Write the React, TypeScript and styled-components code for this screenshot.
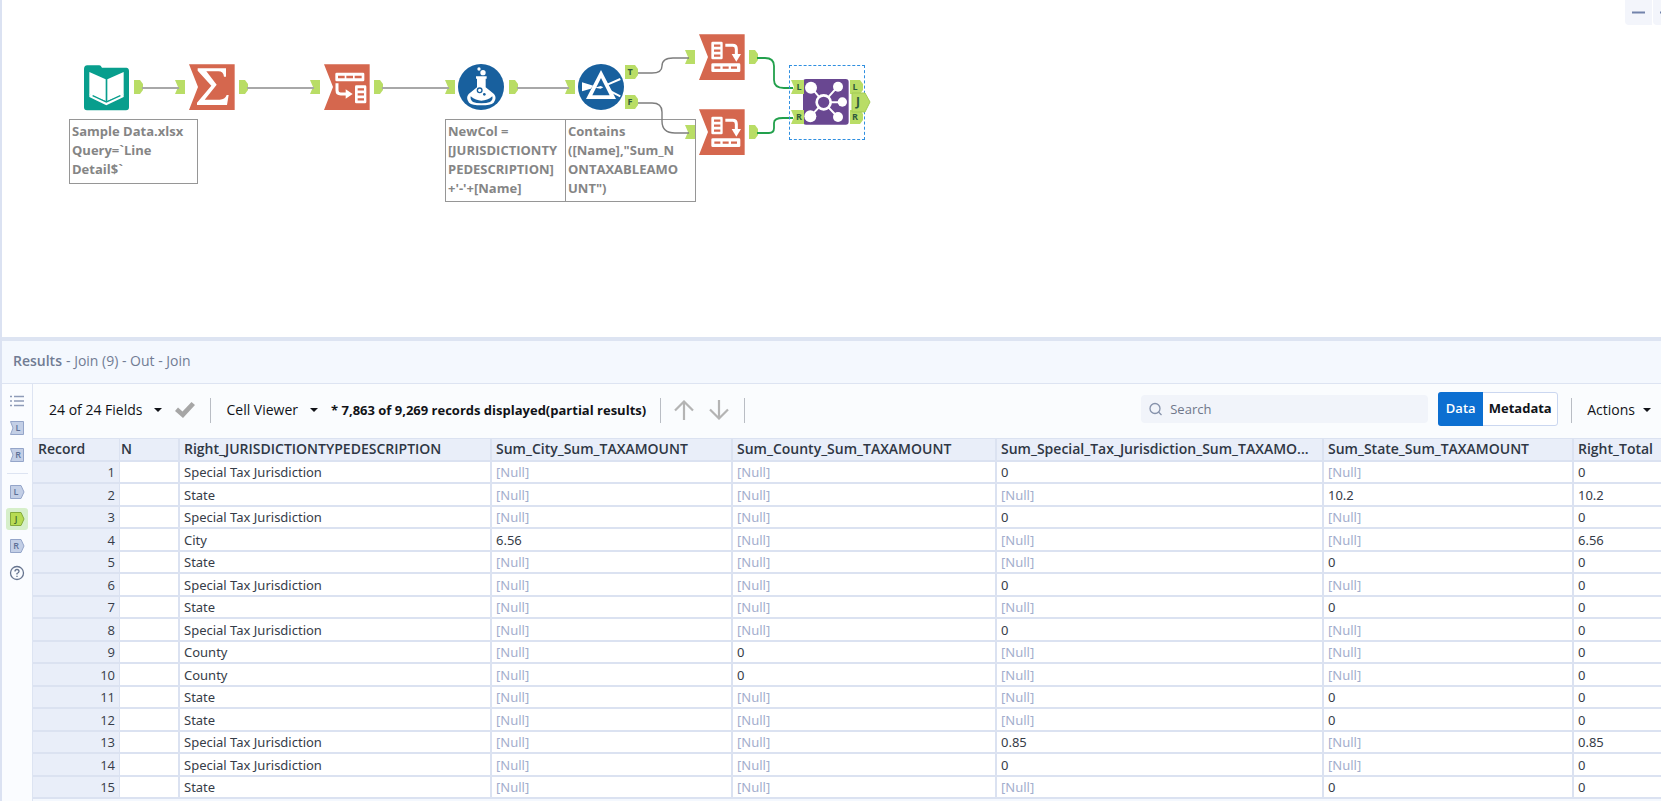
import React from 'react';
import styled, { createGlobalStyle, css } from 'styled-components';

const GlobalStyle = createGlobalStyle`
  *, *::before, *::after { box-sizing: border-box; }
  body {
    margin: 0;
    background: #ffffff;
    font-family: "Open Sans", "Noto Sans", sans-serif;
    font-size: 13px;
    line-height: 18px;
    color: #2f3744;
  }
  button, input { font: inherit; color: inherit; }
`;

/* ---------- workspace ---------- */

const Workspace = styled.div`
  display: flex;
  flex-direction: column;
  height: 100vh;
  overflow: hidden;
  border-left: 2px solid #dbe2f2;
`;

const Canvas = styled.main`
  position: relative;
  flex: none;
  height: 337px;
  overflow: hidden;
  background: #ffffff;
`;

const CanvasContent = styled.div`
  position: absolute;
  top: 0;
  left: -2px;
`;

const Placed = styled.div<{ $x: number; $y: number }>`
  position: absolute;
  left: ${(p) => p.$x}px;
  top: ${(p) => p.$y}px;
  line-height: 0;
`;

const Wires = styled.svg`
  position: absolute;
  left: 0;
  top: 0;
  fill: none;
`;

const Annotation = styled.div<{ $x: number; $width: number; $height: number }>`
  position: absolute;
  left: ${(p) => p.$x}px;
  top: 119px;
  width: ${(p) => p.$width}px;
  height: ${(p) => p.$height}px;
  padding: 2px 0 0 2px;
  border: 1px solid #969696;
  background: #ffffff;
  color: #858585;
  font-size: 13px;
  font-weight: 700;
  line-height: 19px;
  white-space: pre;
`;

const Selection = styled.div`
  position: absolute;
  left: 789px;
  top: 65px;
  width: 76px;
  height: 75px;
  border: 1px dashed #2f8fe0;
`;

const WindowControls = styled.div`
  position: absolute;
  top: 0;
  right: -19px;
  display: flex;
  gap: 1px;
`;

const WindowButton = styled.button`
  display: flex;
  align-items: center;
  justify-content: center;
  width: 27px;
  height: 25px;
  padding: 0;
  border: 0;
  border-radius: 0 0 0 4px;
  background: #f3f5fb;
`;

const Splitter = styled.div`
  flex: none;
  height: 4px;
  background: #dde4f2;
`;

/* ---------- results panel ---------- */

const Results = styled.section`
  display: flex;
  flex: 1;
  flex-direction: column;
  min-height: 0;
  background: #f4f8fe;
`;

const ResultsHeader = styled.header`
  display: flex;
  flex: none;
  gap: 4px;
  align-items: center;
  height: 43px;
  padding: 0 0 2px 11px;
  border-bottom: 1px solid #dde4f2;
  color: #717c94;
  font-size: 14px;
`;

const ResultsTitle = styled.h2`
  margin: 0;
  font-size: 14px;
  font-weight: 600;
`;

const ResultsBody = styled.div`
  display: flex;
  flex: 1;
  min-height: 0;
`;

const Rail = styled.nav`
  display: flex;
  flex: none;
  flex-direction: column;
  gap: 5px;
  align-items: center;
  width: 31px;
  padding-top: 6px;
  border-right: 1px solid #dde4f2;
  background: #fafcff;
`;

const RailButton = styled.button<{ $active?: boolean }>`
  display: flex;
  align-items: center;
  justify-content: center;
  width: 22px;
  height: 22px;
  padding: 0;
  border: 0;
  border-radius: 3px;
  background: ${(p) => (p.$active ? '#d6efca' : 'transparent')};
`;

const RailRule = styled.hr`
  width: 21px;
  height: 1px;
  margin: 2px 0;
  border: 0;
  background: #dde4f2;
`;

const Sheet = styled.div`
  display: flex;
  flex: 1;
  flex-direction: column;
  min-width: 0;
  overflow: hidden;
`;

const Toolbar = styled.div`
  display: flex;
  flex: none;
  align-items: center;
  height: 54px;
  padding: 0 10px 2px 16px;
  background: #fafcfe;
  color: #111318;
`;

const MenuButton = styled.button`
  display: flex;
  gap: 12px;
  align-items: center;
  padding: 0;
  border: 0;
  background: none;
  font-size: 14px;
  white-space: nowrap;
`;

const ActionsButton = styled(MenuButton)`
  gap: 8px;
`;

const Caret = styled.span`
  border: 4px solid transparent;
  border-top-color: #111318;
  border-bottom: 0;
`;

const Divider = styled.span<{ $before: number; $after: number }>`
  width: 1px;
  height: 25px;
  margin: 0 ${(p) => p.$after}px 0 ${(p) => p.$before}px;
  background: #b9bdc4;
`;

const IconButton = styled.button<{ $before?: number }>`
  display: flex;
  padding: 0;
  margin-left: ${(p) => p.$before ?? 0}px;
  border: 0;
  background: none;
`;

const RecordCount = styled.strong`
  margin-left: 13px;
  font-weight: 700;
  white-space: nowrap;
`;

const SearchField = styled.label`
  display: flex;
  gap: 8px;
  align-items: center;
  width: 287px;
  height: 28px;
  margin: 0 10px 2px auto;
  padding: 0 8px;
  border-radius: 4px;
  background: #f1f4fa;
`;

const SearchInput = styled.input`
  flex: 1;
  min-width: 0;
  padding: 0;
  border: 0;
  outline: 0;
  background: none;
  &::placeholder { color: #6f7789; opacity: 1; }
`;

const Segments = styled.div`
  display: flex;
  height: 34px;
  margin-bottom: 2px;
  border: 1px solid #cbd7f0;
  border-radius: 3px;
  background: #ffffff;
`;

const Segment = styled.button<{ $active?: boolean }>`
  width: 74px;
  padding: 0 0 2px;
  border: 0;
  background: none;
  font-weight: 700;
  ${(p) =>
    p.$active &&
    css`
      width: 45px;
      margin: -1px 0 -1px -1px;
      border-radius: 3px 0 0 3px;
      background: #0c6fd1;
      color: #ffffff;
      font-weight: 600;
    `}
`;

/* ---------- data grid ---------- */

const Grid = styled.table`
  width: 100%;
  table-layout: fixed;
  border-collapse: separate;
  border-spacing: 0;
  background: #ffffff;
`;

const Col = styled.col<{ $width?: number }>`
  width: ${(p) => (p.$width ? `${p.$width}px` : 'auto')};
`;

const HeadCell = styled.th`
  height: 24px;
  padding: 0 8px 2px 4px;
  overflow: hidden;
  border: solid #dbe2f1;
  border-width: 1px 2px 2px 0;
  background: #e9eef9;
  font-size: 14px;
  font-weight: 600;
  line-height: 18px;
  text-align: left;
  text-overflow: ellipsis;
  white-space: nowrap;
  &:nth-child(1) { padding-left: 5px; border-right-width: 1px; }
  &:nth-child(2) { padding-left: 1px; }
  &:last-child { border-right-width: 0; }
`;

const Row = styled.tr`
  height: 22px;
  &:nth-child(even) { height: 23px; }
`;

const Cell = styled.td<{ $muted?: boolean }>`
  padding: 0 0 0 4px;
  border: solid #dbe2f1;
  border-width: 0 2px 2px 0;
  color: ${(p) => (p.$muted ? '#a3aecd' : '#363c48')};
  font-family: "Noto Sans", "Open Sans", sans-serif;
  line-height: 20px;
  white-space: nowrap;
  &:last-child { border-right-width: 0; }
`;

const RecordCell = styled.th`
  padding: 0 4px 0 0;
  border: solid #dbe2f1;
  border-width: 0 1px 2px 0;
  background: #e9eef9;
  color: #363c48;
  font-weight: 400;
  line-height: 20px;
  text-align: right;
`;

/* ---------- tool drawings ---------- */

type IconProps = { children: React.ReactNode };

const ToolSvg = ({ children }: IconProps) => (
  <svg width="46" height="46" viewBox="0 0 138 138" aria-hidden="true">
    {children}
  </svg>
);

const Ribbon = () => <path d="M0 1H137V138H0L27 69Z" fill="#d5674e" />;

const InputIcon = () => (
  <ToolSvg>
    <path d="M10 1H46Q50 1 54 8H127Q135 9 135 18V127Q135 136 126 136H9Q0 136 0 127V12Q0 2 10 1Z" fill="#089e8d" />
    <path d="M16 21L65 43V108L16 88ZM119 21L70 43V108L119 88Z" fill="#fff" />
    <path d="M16 86L67 111L119 86V96L67 121L16 96Z" fill="#fff" />
    <path d="M26 92L67 111L109 92" fill="none" stroke="#089e8d" strokeWidth="4" />
  </ToolSvg>
);

const SumIcon = () => (
  <ToolSvg>
    <Ribbon />
    <path d="M26 13H111V38H105Q103 22 88 22H52L83 62L47 107H92Q108 107 113 93H119L114 123H24V116L67 65L26 20Z" fill="#fff" />
  </ToolSvg>
);

const TransposeIcon = () => (
  <ToolSvg>
    <Ribbon />
    <rect x="34" y="26" width="87" height="26" rx="4" fill="#fff" />
    <path d="M42 39H62M67 39H87M92 39H113" stroke="#d5674e" strokeWidth="8" />
    <path d="M39 58V79Q39 90 50 90H69" fill="none" stroke="#fff" strokeWidth="9" />
    <path d="M65 76L86 90L65 104Z" fill="#fff" />
    <rect x="93" y="64" width="34" height="54" rx="4" fill="#fff" />
    <path d="M101 76H120M101 91H120M101 106H120" stroke="#d5674e" strokeWidth="7" />
  </ToolSvg>
);

const CrossTabIcon = () => (
  <ToolSvg>
    <Ribbon />
    <rect x="37" y="23" width="34" height="53" rx="4" fill="#fff" />
    <path d="M45 35H64M45 50H64M45 65H64" stroke="#d5674e" strokeWidth="7" />
    <path d="M79 34H101Q112 34 112 45V64" fill="none" stroke="#fff" strokeWidth="9" />
    <path d="M98 60H126L112 83Z" fill="#fff" />
    <rect x="37" y="88" width="87" height="26" rx="4" fill="#fff" />
    <path d="M46 101H64M71 101H89M96 101H114" stroke="#d5674e" strokeWidth="7" />
  </ToolSvg>
);

const FormulaIcon = () => (
  <ToolSvg>
    <circle cx="69" cy="69" r="69" fill="#18609e" />
    <circle cx="63" cy="15" r="5" fill="#fff" />
    <circle cx="75" cy="26" r="8" fill="#fff" />
    <path d="M54 37H86V44H83V70L108 90Q118 102 107 116Q98 124 70 124Q42 124 33 116Q22 102 32 90L57 70V44H54Z" fill="#fff" />
    <path d="M38 97Q54 110 70 110Q88 110 103 97Q106 108 96 114Q86 118 70 118Q54 118 45 114Q36 108 38 97Z" fill="#18609e" />
    <circle cx="65" cy="79" r="7" fill="none" stroke="#18609e" strokeWidth="4" />
    <circle cx="79" cy="91" r="4" fill="#18609e" />
  </ToolSvg>
);

const FilterIcon = () => (
  <ToolSvg>
    <circle cx="69" cy="69" r="69" fill="#18609e" />
    <path d="M12 55L46 65L38 74L12 82Z" fill="#fff" />
    <path d="M69 18L114 105H24ZM69 42L43 94H95Z" fill="#fff" fillRule="evenodd" />
    <path d="M50 71L68 66L76 70L68 74Z" fill="#fff" />
    <path d="M90 61L127 45M98 82L127 97" stroke="#fff" strokeWidth="6" />
  </ToolSvg>
);

const JoinIcon = () => (
  <ToolSvg>
    <rect width="137" height="137" rx="9" fill="#694791" />
    <path d="M62 70L25 26M62 70L104 23M62 70H118M62 70L22 112M62 70L104 114" stroke="#fff" strokeWidth="6" />
    <circle cx="24" cy="26" r="18" fill="#fff" />
    <circle cx="105" cy="23" r="15" fill="#fff" />
    <circle cx="118" cy="69" r="14" fill="#fff" />
    <circle cx="22" cy="112" r="18" fill="#fff" />
    <circle cx="105" cy="114" r="15" fill="#fff" />
    <circle cx="62" cy="70" r="21" fill="#694791" stroke="#fff" strokeWidth="8" />
  </ToolSvg>
);

const ANCHOR_FILL = '#b9dd66';
const ANCHOR_EDGE = '#a3cb55';

const InAnchor = () => (
  <svg width="10" height="14" aria-hidden="true">
    <path d="M0 0H10V14H0L3 7Z" fill={ANCHOR_FILL} />
  </svg>
);

const OutAnchor = () => (
  <svg width="10" height="14" aria-hidden="true">
    <path d="M0 0H6L9 4V10L6 14H0Z" fill={ANCHOR_FILL} />
  </svg>
);

const AnchorLabel = styled.text<{ $large?: boolean }>`
  fill: #2f5a3c;
  font-size: ${(p) => (p.$large ? 12 : 9)}px;
  font-weight: 700;
  text-anchor: middle;
`;

const LabelledAnchor = ({ label, input }: { label: string; input?: boolean }) => (
  <svg width="13" height="14">
    <path d={input ? 'M0 0H13V14H0L3 7Z' : 'M0 0H10L13 4V10L10 14H0Z'} fill={ANCHOR_FILL} />
    <AnchorLabel x={input ? 8 : 5} y="10">{label}</AnchorLabel>
  </svg>
);

const JoinAnchor = () => (
  <svg width="20" height="21">
    <path d="M1 1H14L19 10L14 20H1Z" fill={ANCHOR_FILL} stroke={ANCHOR_EDGE} />
    <AnchorLabel $large x="7" y="14">J</AnchorLabel>
  </svg>
);

const TOOLS: { x: number; y: number; icon: React.ReactNode }[] = [
  { x: 84, y: 65, icon: <InputIcon /> },
  { x: 189, y: 64, icon: <SumIcon /> },
  { x: 324, y: 64, icon: <TransposeIcon /> },
  { x: 458, y: 64, icon: <FormulaIcon /> },
  { x: 578, y: 64, icon: <FilterIcon /> },
  { x: 699, y: 34, icon: <CrossTabIcon /> },
  { x: 699, y: 109, icon: <CrossTabIcon /> },
  { x: 803, y: 79, icon: <JoinIcon /> },
];

const ANCHORS: { x: number; y: number; mark: React.ReactNode }[] = [
  { x: 134, y: 80, mark: <OutAnchor /> },
  { x: 175, y: 80, mark: <InAnchor /> },
  { x: 239, y: 80, mark: <OutAnchor /> },
  { x: 310, y: 80, mark: <InAnchor /> },
  { x: 374, y: 80, mark: <OutAnchor /> },
  { x: 445, y: 80, mark: <InAnchor /> },
  { x: 509, y: 80, mark: <OutAnchor /> },
  { x: 565, y: 80, mark: <InAnchor /> },
  { x: 625, y: 65, mark: <LabelledAnchor label="T" /> },
  { x: 625, y: 95, mark: <LabelledAnchor label="F" /> },
  { x: 685, y: 50, mark: <InAnchor /> },
  { x: 685, y: 125, mark: <InAnchor /> },
  { x: 749, y: 50, mark: <OutAnchor /> },
  { x: 749, y: 125, mark: <OutAnchor /> },
  { x: 791, y: 80, mark: <LabelledAnchor label="L" input /> },
  { x: 791, y: 110, mark: <LabelledAnchor label="R" input /> },
  { x: 850, y: 80, mark: <LabelledAnchor label="L" /> },
  { x: 850, y: 110, mark: <LabelledAnchor label="R" /> },
];

const Workflow = () => (
  <CanvasContent>
    <Annotation $x={69} $width={129} $height={65}>{'Sample Data.xlsx\nQuery=`Line\nDetail$`'}</Annotation>
    <Annotation $x={445} $width={121} $height={83}>
      {"NewCol =\n[JURISDICTIONTY\nPEDESCRIPTION]\n+'-'+[Name]"}
    </Annotation>
    <Annotation $x={565} $width={131} $height={83}>
      {'Contains\n([Name],"Sum_N\nONTAXABLEAMO\nUNT")'}
    </Annotation>
    {TOOLS.map((t) => (
      <Placed key={`${t.x}-${t.y}`} $x={t.x} $y={t.y}>{t.icon}</Placed>
    ))}
    {ANCHORS.map((a) => (
      <Placed key={`${a.x}-${a.y}`} $x={a.x} $y={a.y}>{a.mark}</Placed>
    ))}
    <Wires width="900" height="220" aria-hidden="true">
      <path d="M142 88H179M247 88H314M382 88H449M517 88H569" stroke="#a8a8a8" strokeWidth="2" />
      <path
        d="M638 73H652Q662 73 662 66Q662 58 673 58H689M638 103H652Q662 103 662 112V121Q662 133 675 133H689"
        stroke="#7d7d7d"
        strokeWidth="1.4"
      />
      <path
        d="M757 58H765Q774 58 774 66V80Q774 88 784 88H793M757 133H769Q774 133 774 128V123Q774 118 783 118H793"
        stroke="#22a04c"
        strokeWidth="1.8"
      />
    </Wires>
    <Selection />
    <Placed $x={851} $y={92}><JoinAnchor /></Placed>
  </CanvasContent>
);

/* ---------- small icons ---------- */

const ListIcon = () => (
  <svg width="14" height="12" aria-hidden="true">
    <path d="M4 1.500H14M4 6H14M4 10.500H14" stroke="#8e9bb8" strokeWidth="1.4" />
    <path d="M0 1.500H2M0 6H2M0 10.500H2" stroke="#8e9bb8" strokeWidth="1.6" />
  </svg>
);

const RailMark = ({ label, input, active }: { label: string; input?: boolean; active?: boolean }) => (
  <svg width="16" height="16">
    <path
      d={input ? 'M1.500 1.500H14.500V14.500H1.500L4 8Z' : 'M1.500 1.500H12L15 8L12 14.500H1.500Z'}
      fill={active ? '#b7dc53' : '#c3cfe6'}
      stroke={active ? '#84ab3c' : '#94a5c9'}
    />
    <text
      x={input ? 9 : 7}
      y="11"
      fontSize="9"
      fontWeight="600"
      textAnchor="middle"
      fill={active ? '#3f6a2c' : '#5d7096'}
    >
      {label}
    </text>
  </svg>
);

const HelpIcon = () => (
  <svg width="16" height="16" aria-hidden="true" fill="none" stroke="#66748f" strokeWidth="1.3">
    <circle cx="8" cy="8" r="6.5" />
    <path d="M6 6.500Q6 4.500 8 4.500T10 6.500Q10 7.500 8 8.500V9.500M8 10.700V12" />
  </svg>
);

const CheckIcon = () => (
  <svg width="20" height="16" aria-hidden="true">
    <path d="M0 9L3 5.500L7.500 9.500L16.500 0L20 3L8 16Z" fill="#a6a6a6" />
  </svg>
);

const ArrowIcon = ({ down }: { down?: boolean }) => (
  <svg width="20" height="20" aria-hidden="true" fill="none" stroke="#b4b4b4" strokeWidth="2.2">
    <path d={down ? 'M10 0V18M1 9.500L10 18.500L19 9.500' : 'M10 20V2M1 10.500L10 1.500L19 10.500'} />
  </svg>
);

const SearchIcon = () => (
  <svg width="13" height="14" aria-hidden="true" fill="none" stroke="#8692ab" strokeWidth="1.3">
    <circle cx="6" cy="6.5" r="5" />
    <path d="M9.500 10L12.500 13" />
  </svg>
);

/* ---------- data ---------- */

const COLUMNS: { title: string; width?: number }[] = [
  { title: 'Record', width: 87 },
  { title: 'N', width: 60 },
  { title: 'Right_JURISDICTIONTYPEDESCRIPTION', width: 312 },
  { title: 'Sum_City_Sum_TAXAMOUNT', width: 241 },
  { title: 'Sum_County_Sum_TAXAMOUNT', width: 264 },
  { title: 'Sum_Special_Tax_Jurisdiction_Sum_TAXAMO...', width: 327 },
  { title: 'Sum_State_Sum_TAXAMOUNT', width: 250 },
  { title: 'Right_Total' },
];

const KINDS = ['City', 'County', 'Special Tax Jurisdiction', 'State'];

const RECORDS: [string, string][] = [
  ['Special Tax Jurisdiction', '0'],
  ['State', '10.2'],
  ['Special Tax Jurisdiction', '0'],
  ['City', '6.56'],
  ['State', '0'],
  ['Special Tax Jurisdiction', '0'],
  ['State', '0'],
  ['Special Tax Jurisdiction', '0'],
  ['County', '0'],
  ['County', '0'],
  ['State', '0'],
  ['State', '0'],
  ['Special Tax Jurisdiction', '0.85'],
  ['Special Tax Jurisdiction', '0'],
  ['State', '0'],
];

const ResultsGrid = () => (
  <Grid>
    <colgroup>
      {COLUMNS.map((c) => (
        <Col key={c.title} $width={c.width} />
      ))}
    </colgroup>
    <thead>
      <tr>
        {COLUMNS.map((c) => (
          <HeadCell key={c.title} scope="col">{c.title}</HeadCell>
        ))}
      </tr>
    </thead>
    <tbody>
      {RECORDS.map(([kind, amount], i) => (
        <Row key={i}>
          <RecordCell scope="row">{i + 1}</RecordCell>
          <Cell />
          <Cell>{kind}</Cell>
          {KINDS.map((k) => (
            <Cell key={k} $muted={k !== kind}>{k === kind ? amount : '[Null]'}</Cell>
          ))}
          <Cell>{amount}</Cell>
        </Row>
      ))}
    </tbody>
  </Grid>
);

export default function App() {
  return (
    <>
      <GlobalStyle />
      <Workspace>
        <Canvas>
          <Workflow />
          <WindowControls>
            <WindowButton aria-label="Zoom out">
              <svg width="13" height="3"><path d="M0 1.500H13" stroke="#7283ab" strokeWidth="2" /></svg>
            </WindowButton>
            <WindowButton aria-label="Zoom in">
              <svg width="13" height="13"><path d="M0 6.500H13M6.500 0V13" stroke="#7283ab" strokeWidth="2" /></svg>
            </WindowButton>
          </WindowControls>
        </Canvas>
        <Splitter />
        <Results>
          <ResultsHeader>
            <ResultsTitle>Results</ResultsTitle>
            <span>- Join (9) - Out - Join</span>
          </ResultsHeader>
          <ResultsBody>
            <Rail aria-label="Result views">
              <RailButton aria-label="Messages"><ListIcon /></RailButton>
              <RailButton><RailMark label="L" input /></RailButton>
              <RailButton><RailMark label="R" input /></RailButton>
              <RailRule />
              <RailButton><RailMark label="L" /></RailButton>
              <RailButton $active><RailMark label="J" active /></RailButton>
              <RailButton><RailMark label="R" /></RailButton>
              <RailButton aria-label="Help"><HelpIcon /></RailButton>
            </Rail>
            <Sheet>
              <Toolbar>
                <MenuButton aria-haspopup="menu">24 of 24 Fields<Caret /></MenuButton>
                <IconButton aria-label="Apply" $before={13}><CheckIcon /></IconButton>
                <Divider $before={15} $after={15} />
                <MenuButton aria-haspopup="menu">Cell Viewer<Caret /></MenuButton>
                <RecordCount>* 7,863 of 9,269 records displayed(partial results)</RecordCount>
                <Divider $before={14} $after={13} />
                <IconButton aria-label="Previous"><ArrowIcon /></IconButton>
                <IconButton aria-label="Next" $before={15}><ArrowIcon down /></IconButton>
                <Divider $before={15} $after={15} />
                <SearchField>
                  <SearchIcon />
                  <SearchInput type="search" placeholder="Search" aria-label="Search" />
                </SearchField>
                <Segments>
                  <Segment $active aria-pressed="true">Data</Segment>
                  <Segment aria-pressed="false">Metadata</Segment>
                </Segments>
                <Divider $before={13} $after={15} />
                <ActionsButton aria-haspopup="menu">Actions<Caret /></ActionsButton>
              </Toolbar>
              <ResultsGrid />
            </Sheet>
          </ResultsBody>
        </Results>
      </Workspace>
    </>
  );
}
